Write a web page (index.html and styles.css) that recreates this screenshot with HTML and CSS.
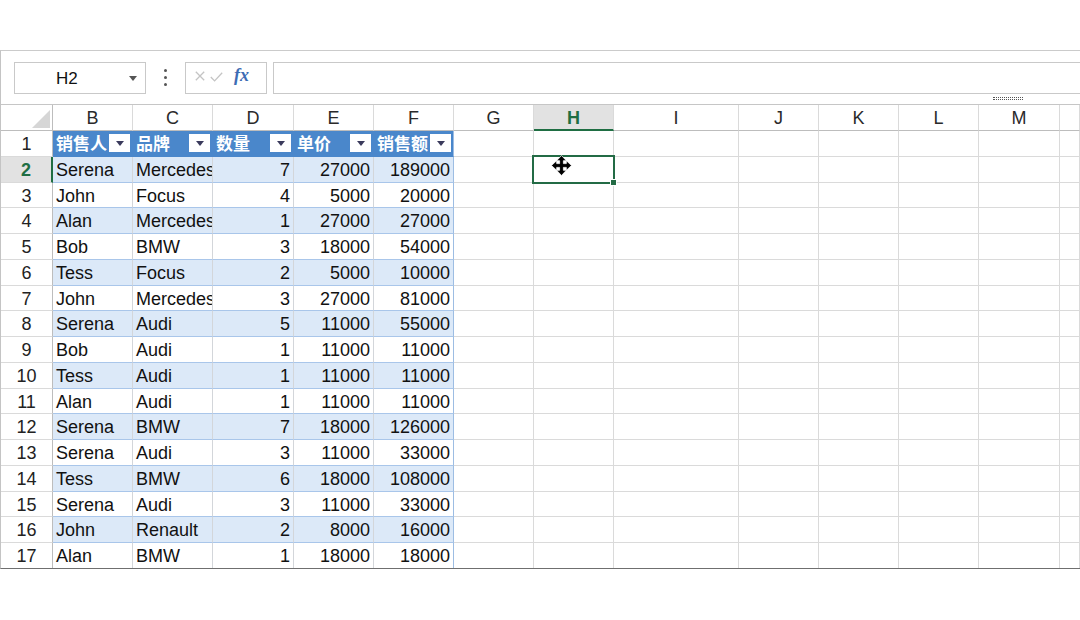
FILE: index.html
```
<!DOCTYPE html>
<html lang="zh">
<head>
<meta charset="utf-8">
<title>Sheet</title>
<link rel="stylesheet" href="styles.css">
</head>
<body>
<div class="page">
  <div class="sheet">
    <div class="toolbar">
      <div class="bar">
        <div class="namebox"><span class="ref">H2</span><span class="caret"></span></div>
        <div class="dots"><i></i><i></i><i></i></div>
        <div class="fxbox">
          <svg class="x" width="10" height="10" viewBox="0 0 10 10"><path d="M0.8 0.8 L9.2 9.2 M9.2 0.8 L0.8 9.2" stroke="#c4c4c4" stroke-width="1.3" fill="none"/></svg>
          <svg class="ok" width="13" height="10" viewBox="0 0 13 10"><path d="M0.8 5 L4.6 8.9 L12.2 0.8" stroke="#c4c4c4" stroke-width="1.3" fill="none"/></svg>
          <span class="fx">fx</span>
        </div>
        <div class="input"></div>
      </div>
      <div class="grip"></div>
    </div>
    <div class="grid">
      <div class="row">
        <div class="corner"><span class="tri"></span></div>
        <div class="ch">B</div><div class="ch">C</div><div class="ch">D</div><div class="ch">E</div><div class="ch">F</div><div class="ch">G</div><div class="ch sel">H</div><div class="ch">I</div><div class="ch">J</div><div class="ch">K</div><div class="ch">L</div><div class="ch">M</div><div class="ch"></div>
      </div>
      <div class="row">
        <div class="rh">1</div>
        <div class="t th"><span class="lbl">销售人</span><span class="dd"><i></i></span></div>
        <div class="t th"><span class="lbl">品牌</span><span class="dd"><i></i></span></div>
        <div class="t th"><span class="lbl">数量</span><span class="dd"><i></i></span></div>
        <div class="t th"><span class="lbl">单价</span><span class="dd"><i></i></span></div>
        <div class="t th r"><span class="lbl">销售额</span><span class="dd"><i></i></span></div>
        <div class="c"></div><div class="c"></div><div class="c"></div><div class="c"></div><div class="c"></div><div class="c"></div><div class="c"></div><div class="c"></div>
      </div>
      <div class="row band">
        <div class="rh sel">2</div>
        <div class="t">Serena</div><div class="t">Mercedes</div><div class="t n">7</div><div class="t n">27000</div><div class="t n r">189000</div>
        <div class="c"></div><div class="c"></div><div class="c"></div><div class="c"></div><div class="c"></div><div class="c"></div><div class="c"></div><div class="c"></div>
      </div>
      <div class="row">
        <div class="rh">3</div>
        <div class="t">John</div><div class="t">Focus</div><div class="t n">4</div><div class="t n">5000</div><div class="t n r">20000</div>
        <div class="c"></div><div class="c"></div><div class="c"></div><div class="c"></div><div class="c"></div><div class="c"></div><div class="c"></div><div class="c"></div>
      </div>
      <div class="row band">
        <div class="rh">4</div>
        <div class="t">Alan</div><div class="t">Mercedes</div><div class="t n">1</div><div class="t n">27000</div><div class="t n r">27000</div>
        <div class="c"></div><div class="c"></div><div class="c"></div><div class="c"></div><div class="c"></div><div class="c"></div><div class="c"></div><div class="c"></div>
      </div>
      <div class="row">
        <div class="rh">5</div>
        <div class="t">Bob</div><div class="t">BMW</div><div class="t n">3</div><div class="t n">18000</div><div class="t n r">54000</div>
        <div class="c"></div><div class="c"></div><div class="c"></div><div class="c"></div><div class="c"></div><div class="c"></div><div class="c"></div><div class="c"></div>
      </div>
      <div class="row band">
        <div class="rh">6</div>
        <div class="t">Tess</div><div class="t">Focus</div><div class="t n">2</div><div class="t n">5000</div><div class="t n r">10000</div>
        <div class="c"></div><div class="c"></div><div class="c"></div><div class="c"></div><div class="c"></div><div class="c"></div><div class="c"></div><div class="c"></div>
      </div>
      <div class="row">
        <div class="rh">7</div>
        <div class="t">John</div><div class="t">Mercedes</div><div class="t n">3</div><div class="t n">27000</div><div class="t n r">81000</div>
        <div class="c"></div><div class="c"></div><div class="c"></div><div class="c"></div><div class="c"></div><div class="c"></div><div class="c"></div><div class="c"></div>
      </div>
      <div class="row band">
        <div class="rh">8</div>
        <div class="t">Serena</div><div class="t">Audi</div><div class="t n">5</div><div class="t n">11000</div><div class="t n r">55000</div>
        <div class="c"></div><div class="c"></div><div class="c"></div><div class="c"></div><div class="c"></div><div class="c"></div><div class="c"></div><div class="c"></div>
      </div>
      <div class="row">
        <div class="rh">9</div>
        <div class="t">Bob</div><div class="t">Audi</div><div class="t n">1</div><div class="t n">11000</div><div class="t n r">11000</div>
        <div class="c"></div><div class="c"></div><div class="c"></div><div class="c"></div><div class="c"></div><div class="c"></div><div class="c"></div><div class="c"></div>
      </div>
      <div class="row band">
        <div class="rh">10</div>
        <div class="t">Tess</div><div class="t">Audi</div><div class="t n">1</div><div class="t n">11000</div><div class="t n r">11000</div>
        <div class="c"></div><div class="c"></div><div class="c"></div><div class="c"></div><div class="c"></div><div class="c"></div><div class="c"></div><div class="c"></div>
      </div>
      <div class="row">
        <div class="rh">11</div>
        <div class="t">Alan</div><div class="t">Audi</div><div class="t n">1</div><div class="t n">11000</div><div class="t n r">11000</div>
        <div class="c"></div><div class="c"></div><div class="c"></div><div class="c"></div><div class="c"></div><div class="c"></div><div class="c"></div><div class="c"></div>
      </div>
      <div class="row band">
        <div class="rh">12</div>
        <div class="t">Serena</div><div class="t">BMW</div><div class="t n">7</div><div class="t n">18000</div><div class="t n r">126000</div>
        <div class="c"></div><div class="c"></div><div class="c"></div><div class="c"></div><div class="c"></div><div class="c"></div><div class="c"></div><div class="c"></div>
      </div>
      <div class="row">
        <div class="rh">13</div>
        <div class="t">Serena</div><div class="t">Audi</div><div class="t n">3</div><div class="t n">11000</div><div class="t n r">33000</div>
        <div class="c"></div><div class="c"></div><div class="c"></div><div class="c"></div><div class="c"></div><div class="c"></div><div class="c"></div><div class="c"></div>
      </div>
      <div class="row band">
        <div class="rh">14</div>
        <div class="t">Tess</div><div class="t">BMW</div><div class="t n">6</div><div class="t n">18000</div><div class="t n r">108000</div>
        <div class="c"></div><div class="c"></div><div class="c"></div><div class="c"></div><div class="c"></div><div class="c"></div><div class="c"></div><div class="c"></div>
      </div>
      <div class="row">
        <div class="rh">15</div>
        <div class="t">Serena</div><div class="t">Audi</div><div class="t n">3</div><div class="t n">11000</div><div class="t n r">33000</div>
        <div class="c"></div><div class="c"></div><div class="c"></div><div class="c"></div><div class="c"></div><div class="c"></div><div class="c"></div><div class="c"></div>
      </div>
      <div class="row band">
        <div class="rh">16</div>
        <div class="t">John</div><div class="t">Renault</div><div class="t n">2</div><div class="t n">8000</div><div class="t n r">16000</div>
        <div class="c"></div><div class="c"></div><div class="c"></div><div class="c"></div><div class="c"></div><div class="c"></div><div class="c"></div><div class="c"></div>
      </div>
      <div class="row">
        <div class="rh">17</div>
        <div class="t">Alan</div><div class="t">BMW</div><div class="t n">1</div><div class="t n">18000</div><div class="t n r">18000</div>
        <div class="c"></div><div class="c"></div><div class="c"></div><div class="c"></div><div class="c"></div><div class="c"></div><div class="c"></div><div class="c"></div>
      </div>
      <div class="selection">
        <svg class="move" width="21" height="21" viewBox="0 0 20 20"><path d="M10 0.5 L14.6 5.4 H11.8 V8.2 H14.6 V5.4 L19.5 10 L14.6 14.6 V11.8 H11.8 V14.6 H14.6 L10 19.5 L5.4 14.6 H8.2 V11.8 H5.4 V14.6 L0.5 10 L5.4 5.4 V8.2 H8.2 V5.4 H5.4 Z" fill="#000" stroke="#fff" stroke-width="0.7" stroke-linejoin="round"/></svg>
        <span class="handle"></span>
      </div>
    </div>
  </div>
</div>
</body>
</html>
```
FILE: styles.css
```
* { box-sizing: border-box; margin: 0; padding: 0; }
html, body { margin: 0; background: #fff; }
body {
  width: 1080px;
  height: 620px;
  overflow: hidden;
  font-family: "Liberation Sans", Arial, Helvetica, sans-serif;
  color: #111;
}
.page { padding-top: 50px; }
.sheet {
  border-top: 1px solid #cbcbcb;
  border-left: 1px solid #c4c4c4;
  border-bottom: 1px solid #6f6f6f;
  overflow: hidden;
}

/* toolbar */
.toolbar {
  height: 53px;
  padding: 11px 0 0 13px;
  display: flex;
  flex-direction: column;
}
.bar { display: flex; height: 32px; }
.namebox {
  width: 132px;
  border: 1px solid #c9c9c9;
  display: flex;
  align-items: center;
  padding-left: 41px;
}
.ref { font-size: 17px; color: #111; padding-top: 1px; }
.caret {
  margin-left: auto;
  margin-right: 8px;
  width: 0; height: 0;
  border-left: 4px solid transparent;
  border-right: 4px solid transparent;
  border-top: 5px solid #555;
}
.dots {
  width: 39px;
  display: flex;
  flex-direction: column;
  align-items: center;
  padding-top: 7px;
  gap: 4px;
}
.dots i { display: block; width: 3px; height: 3px; border-radius: 50%; background: #555; }
.fxbox {
  width: 82px;
  border: 1px solid #c9c9c9;
  display: flex;
  align-items: center;
  padding-left: 9px;
}
.fxbox .x { margin-right: 5px; margin-top: -4px; }
.fxbox .ok { margin-right: 11px; margin-top: -3px; }
.fx {
  font-family: "Liberation Serif", "Times New Roman", serif;
  font-style: italic;
  font-weight: bold;
  font-size: 18px;
  color: #3d6cb4;
  margin-top: -5px;
}
.input {
  flex: 1;
  margin-left: 6px;
  border: 1px solid #c9c9c9;
  border-right: none;
}
.grip {
  margin: 3px 0 0 979px;
  width: 30px;
  height: 3px;
  border-top: 1px dotted #555;
  border-bottom: 1px dotted #555;
}

/* grid */
.grid {
  display: grid;
  grid-template-columns: 52px 80px 80px 81px 80px 80px 80px 80px 125px 80px 80px 80px 81px 1fr;
  grid-template-rows: 26px repeat(17, 25.75px);
  border-top: 1px solid #c6c6c6;
  position: relative;
  margin-bottom: -1px;
  font-size: 18px;
}
.row { display: contents; }

.corner {
  border-right: 1px solid #bdbdbd;
  border-bottom: 1px solid #bdbdbd;
  display: flex;
  justify-content: flex-end;
  align-items: flex-end;
  padding: 0 2px 2px 0;
}
.tri {
  width: 18px; height: 18px;
  background: #d6d6d6;
  clip-path: polygon(100% 0, 100% 100%, 0 100%);
}
.ch {
  border-right: 1px solid #dadada;
  border-bottom: 1px solid #bdbdbd;
  text-align: center;
  line-height: 25px;
  padding-top: 1px;
  color: #2a2a2a;
}
.ch.sel {
  background: #e2e2e2;
  color: #1f6e43;
  font-weight: bold;
  border-bottom: 2px solid #1f6e43;
}
.rh {
  border-right: 1px solid #bdbdbd;
  border-bottom: 1px solid #dadada;
  text-align: center;
  line-height: 24.75px;
  padding-top: 1px;
  color: #222;
}
.rh.sel {
  background: #e2e2e2;
  color: #1f6e43;
  font-weight: bold;
  border-right: 2px solid #1f6e43;
}
.c {
  border-right: 1px solid #dadada;
  border-bottom: 1px solid #dadada;
}
.t {
  border-right: 1px solid #d3d6da;
  border-bottom: 1px solid #a9c6ea;
  padding: 2px 3px 0 3px;
  line-height: 22.75px;
  white-space: nowrap;
  overflow: hidden;
  color: #111;
}
.band .t { background: #dce9f8; }
.t.n { text-align: right; }
.t.r { border-right: 1px solid #9dbde3; }
.t.th {
  background: #4a87cb;
  color: #fff;
  font-family: "Noto Sans CJK SC", "Liberation Sans", sans-serif;
  font-weight: bold;
  font-size: 17px;
  display: flex;
  align-items: center;
  padding: 0 2px 0 3px;
  border-bottom-color: #4a87cb;
  border-right-color: #4a87cb;
}
.t.th.r { border-right-color: #9dbde3; }
.lbl {
  flex: 1;
  min-width: 0;
  overflow: hidden;
  white-space: nowrap;
  line-height: 1.4;
}
.dd {
  flex: none;
  width: 21px;
  height: 18px;
  background: #fff;
  display: flex;
  align-items: center;
  justify-content: center;
}
.dd i {
  display: block;
  width: 0; height: 0;
  border-left: 4px solid transparent;
  border-right: 4px solid transparent;
  border-top: 5px solid #3a3a5c;
}

/* selection overlay */
.selection {
  position: absolute;
  left: 531px;
  top: 50px;
  width: 83px;
  height: 29px;
  border: 2px solid #236b45;
}
.move { position: absolute; left: 17px; top: -2px; }
.handle {
  position: absolute;
  right: -4px;
  bottom: -4px;
  width: 7px;
  height: 7px;
  background: #236b45;
  border: 1px solid #fff;
}
```
